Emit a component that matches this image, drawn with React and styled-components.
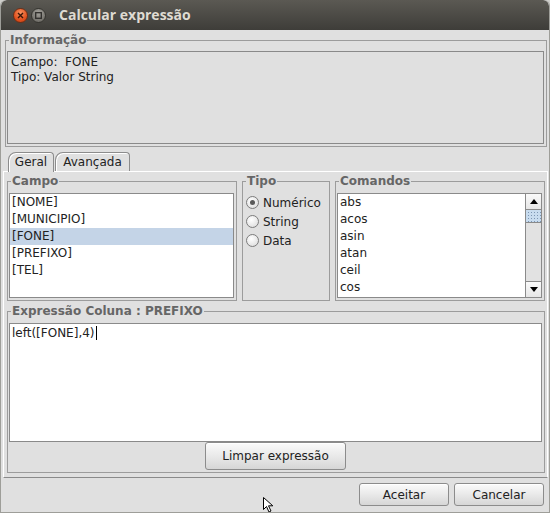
import React from 'react'
import styled, { createGlobalStyle, css } from 'styled-components'

const GlobalStyle = createGlobalStyle`
  html, body {
    margin: 0;
    padding: 0;
    background: #cfcfcb;
  }
  * {
    box-sizing: border-box;
  }
`

const Window = styled.div`
  position: relative;
  width: 550px;
  height: 513px;
  display: flex;
  flex-direction: column;
  background: #e0e0e0;
  border: 1px solid #9e9e99;
  border-top: none;
  border-radius: 6px 6px 0 0;
  overflow: hidden;
  font-family: 'DejaVu Sans', sans-serif;
  font-size: 12px;
  color: #222;
`

const TitleBar = styled.div`
  height: 30px;
  flex: none;
  display: flex;
  align-items: center;
  padding-left: 12px;
  background: linear-gradient(#5b5953, #3e3d39);
  border-radius: 6px 6px 0 0;
`

const WinButton = styled.div`
  width: 15px;
  height: 15px;
  border-radius: 50%;
  margin-right: 3px;
  display: flex;
  align-items: center;
  justify-content: center;
  ${(p) =>
    p.close
      ? css`
          background: radial-gradient(circle at 50% 30%, #f8915f, #e2521f 60%, #c23d12);
          border: 1px solid #6d2e15;
        `
      : css`
          background: radial-gradient(circle at 50% 30%, #a3a19b, #7b7973 60%, #64625d);
          border: 1px solid #35342f;
        `}
`

const Title = styled.span`
  margin-left: 10px;
  font-family: 'Open Sans', sans-serif;
  font-weight: 700;
  font-size: 14px;
  color: #dfdbd2;
  padding-bottom: 1px;
`

const Body = styled.div`
  flex: none;
  padding: 0 1px 0 2px;
  display: flex;
  flex-direction: column;
`

const Group = styled.div`
  position: relative;
  border: 1px solid #9c9c9c;
  padding: 11px 2px 2px 1px;
  display: flex;
  flex-direction: column;
  ${(p) => p.top && `padding-top: ${p.top}px;`}
`

const Legend = styled.span`
  position: absolute;
  top: -8px;
  left: 3px;
  padding: 0 1px;
  background: #e0e0e0;
  font-weight: 700;
  font-size: 12px;
  line-height: 14px;
  color: #666;
`

const InfoGroup = styled(Group)`
  margin: 10px 1px 0 2px;
`

const InfoText = styled.div`
  height: 93px;
  border: 1px solid #8a8a8a;
  padding: 3px 3px;
  line-height: 15px;
  white-space: pre;
`

const TabStrip = styled.div`
  display: flex;
  margin-top: 5px;
  padding-left: 5px;
  height: 19px;
  align-items: flex-end;
`

const Tab = styled.div`
  position: relative;
  height: 19px;
  padding: 2px 0 0;
  border: 1px solid #8c8c8c;
  border-bottom: none;
  border-radius: 8px 4px 0 0;
  background: #e0e0e0;
  box-shadow: inset 1px 1px 0 #fff;
  line-height: 15px;
  width: ${(p) => p.w}px;
  text-align: center;
  margin-right: 1px;
  ${(p) =>
    p.active &&
    css`
      height: 20px;
      margin-bottom: -1px;
      z-index: 2;
    `}
`

const TabPanel = styled.div`
  height: 307px;
  border: 1px solid #8a8a8a;
  border-top-color: #fff;
  border-left-color: #fff;
  border-right-color: #fff;
  padding: 0 2px 4px 3px;
  display: flex;
  flex-direction: column;
`

const GroupRow = styled.div`
  display: grid;
  grid-template-columns: 230px 88px 1fr;
  column-gap: 5px;
  margin-top: 9px;
  height: 120px;
`

const ListBox = styled.div`
  position: relative;
  height: 105px;
  border: 1px solid #8a8a8a;
  background: #fff;
  overflow: hidden;
  ${(p) => p.scroll && 'padding-right: 16px;'}
`

const ListItem = styled.div`
  height: 17px;
  line-height: 17px;
  padding-left: 2px;
  background: ${(p) => (p.selected ? '#c4d4e7' : 'transparent')};
`

const ScrollBar = styled.div`
  position: absolute;
  top: 0;
  right: 0;
  bottom: 0;
  width: 16px;
  display: flex;
  flex-direction: column;
  background: #e2e2e2;
  border-left: 1px solid #8a8a8a;
`

const ScrollButton = styled.div`
  height: 16px;
  flex: none;
  display: flex;
  align-items: center;
  justify-content: center;
  background: linear-gradient(#fafafa, #e6e6e6);
  border-bottom: ${(p) => (p.down ? 'none' : '1px solid #8a8a8a')};
  border-top: ${(p) => (p.down ? '1px solid #8a8a8a' : 'none')};
`

const Thumb = styled.div`
  height: 13px;
  flex: none;
  border-bottom: 1px solid #8a8a8a;
  background-color: #c8dcef;
  background-image: radial-gradient(#7d96b3 0.6px, transparent 0.8px);
  background-size: 3px 3px;
  background-position: 1px 1px;
`

const Track = styled.div`
  flex: 1;
`

const RadioList = styled.div`
  display: flex;
  flex-direction: column;
  padding-left: 2px;
`

const RadioRow = styled.label`
  display: flex;
  align-items: center;
  height: 19px;
  gap: 4px;
`

const RadioCircle = styled.span`
  width: 13px;
  height: 13px;
  border-radius: 50%;
  border: 1px solid #7c7c7c;
  background: radial-gradient(circle at 40% 35%, #ffffff, #e4e4e4 70%, #cfcfcf);
  display: flex;
  align-items: center;
  justify-content: center;

  &::after {
    content: '';
    width: 5px;
    height: 5px;
    border-radius: 50%;
    background: ${(p) => (p.checked ? '#5a5a5a' : 'transparent')};
  }
`

const ExprGroup = styled(Group)`
  margin-top: 10px;
  height: 162px;
`

const ExprArea = styled.div`
  height: 119px;
  border: 1px solid #8a8a8a;
  background: #fff;
  padding: 2px 2px;
  line-height: 15px;
`

const Caret = styled.span`
  display: inline-block;
  width: 1px;
  height: 14px;
  background: #000;
  vertical-align: -3px;
  margin-left: 1px;
`

const Button = styled.button`
  font-family: 'DejaVu Sans', sans-serif;
  font-size: 12px;
  color: #222;
  width: ${(p) => p.w}px;
  height: ${(p) => p.h}px;
  border: 1px solid #8c8c8c;
  border-radius: 3px;
  background: linear-gradient(#fbfbfb, #e9e9e9 50%, #d6d6d6);
  box-shadow: inset 0 1px 0 #fff;
  padding: 0;
`

const CenterRow = styled.div`
  display: flex;
  justify-content: center;
`

const ButtonBar = styled.div`
  flex: 1;
  display: flex;
  justify-content: flex-end;
  align-items: flex-start;
  gap: 5px;
  padding: 5px 5px 0 0;
`

const Pointer = styled.svg`
  position: absolute;
  left: 262px;
  top: 497px;
`

const campos = ['[NOME]', '[MUNICIPIO]', '[FONE]', '[PREFIXO]', '[TEL]']
const comandos = ['abs', 'acos', 'asin', 'atan', 'ceil', 'cos']
const tipos = ['Numérico', 'String', 'Data']

export default function App() {
  return (
    <>
      <GlobalStyle />
      <Window>
        <TitleBar>
          <WinButton close>
            <svg width="7" height="7" viewBox="0 0 7 7">
              <path d="M1 1L6 6M6 1L1 6" stroke="#3b1608" strokeWidth="1.4" />
            </svg>
          </WinButton>
          <WinButton>
            <svg width="7" height="7" viewBox="0 0 7 7">
              <rect x="0.7" y="0.7" width="5.6" height="5.6" fill="none" stroke="#2e2d2a" strokeWidth="1.3" />
            </svg>
          </WinButton>
          <Title>Calcular expressão</Title>
        </TitleBar>
        <Body>
          <InfoGroup top={10}>
            <Legend>Informação</Legend>
            <InfoText>{'Campo:  FONE\nTipo: Valor String'}</InfoText>
          </InfoGroup>
          <TabStrip>
            <Tab active w={46}>Geral</Tab>
            <Tab w={75}>Avançada</Tab>
          </TabStrip>
          <TabPanel>
            <GroupRow>
              <Group>
                <Legend>Campo</Legend>
                <ListBox>
                  {campos.map((c) => (
                    <ListItem key={c} selected={c === '[FONE]'}>
                      {c}
                    </ListItem>
                  ))}
                </ListBox>
              </Group>
              <Group>
                <Legend>Tipo</Legend>
                <RadioList>
                  {tipos.map((t, i) => (
                    <RadioRow key={t}>
                      <RadioCircle checked={i === 0} />
                      {t}
                    </RadioRow>
                  ))}
                </RadioList>
              </Group>
              <Group>
                <Legend>Comandos</Legend>
                <ListBox scroll>
                  {comandos.map((c) => (
                    <ListItem key={c}>{c}</ListItem>
                  ))}
                  <ScrollBar>
                    <ScrollButton>
                      <svg width="8" height="5" viewBox="0 0 8 5">
                        <path d="M0 5L4 0L8 5Z" fill="#000" />
                      </svg>
                    </ScrollButton>
                    <Thumb />
                    <Track />
                    <ScrollButton down>
                      <svg width="8" height="5" viewBox="0 0 8 5">
                        <path d="M0 0L8 0L4 5Z" fill="#000" />
                      </svg>
                    </ScrollButton>
                  </ScrollBar>
                </ListBox>
              </Group>
            </GroupRow>
            <ExprGroup>
              <Legend>Expressão Coluna : PREFIXO</Legend>
              <ExprArea>
                left([FONE],4)
                <Caret />
              </ExprArea>
              <CenterRow>
                <Button w={141} h={28}>Limpar expressão</Button>
              </CenterRow>
            </ExprGroup>
          </TabPanel>
        </Body>
        <ButtonBar>
          <Button w={90} h={23}>Aceitar</Button>
          <Button w={90} h={23}>Cancelar</Button>
        </ButtonBar>
        <Pointer width="11" height="16" viewBox="0 0 11 16">
          <path d="M0.5 0.5L0.5 12.5L3.5 9.5L6 15L8 14L5.5 8.8L9.8 8.8Z" fill="#fff" stroke="#000" strokeWidth="1" />
        </Pointer>
      </Window>
    </>
  )
}
